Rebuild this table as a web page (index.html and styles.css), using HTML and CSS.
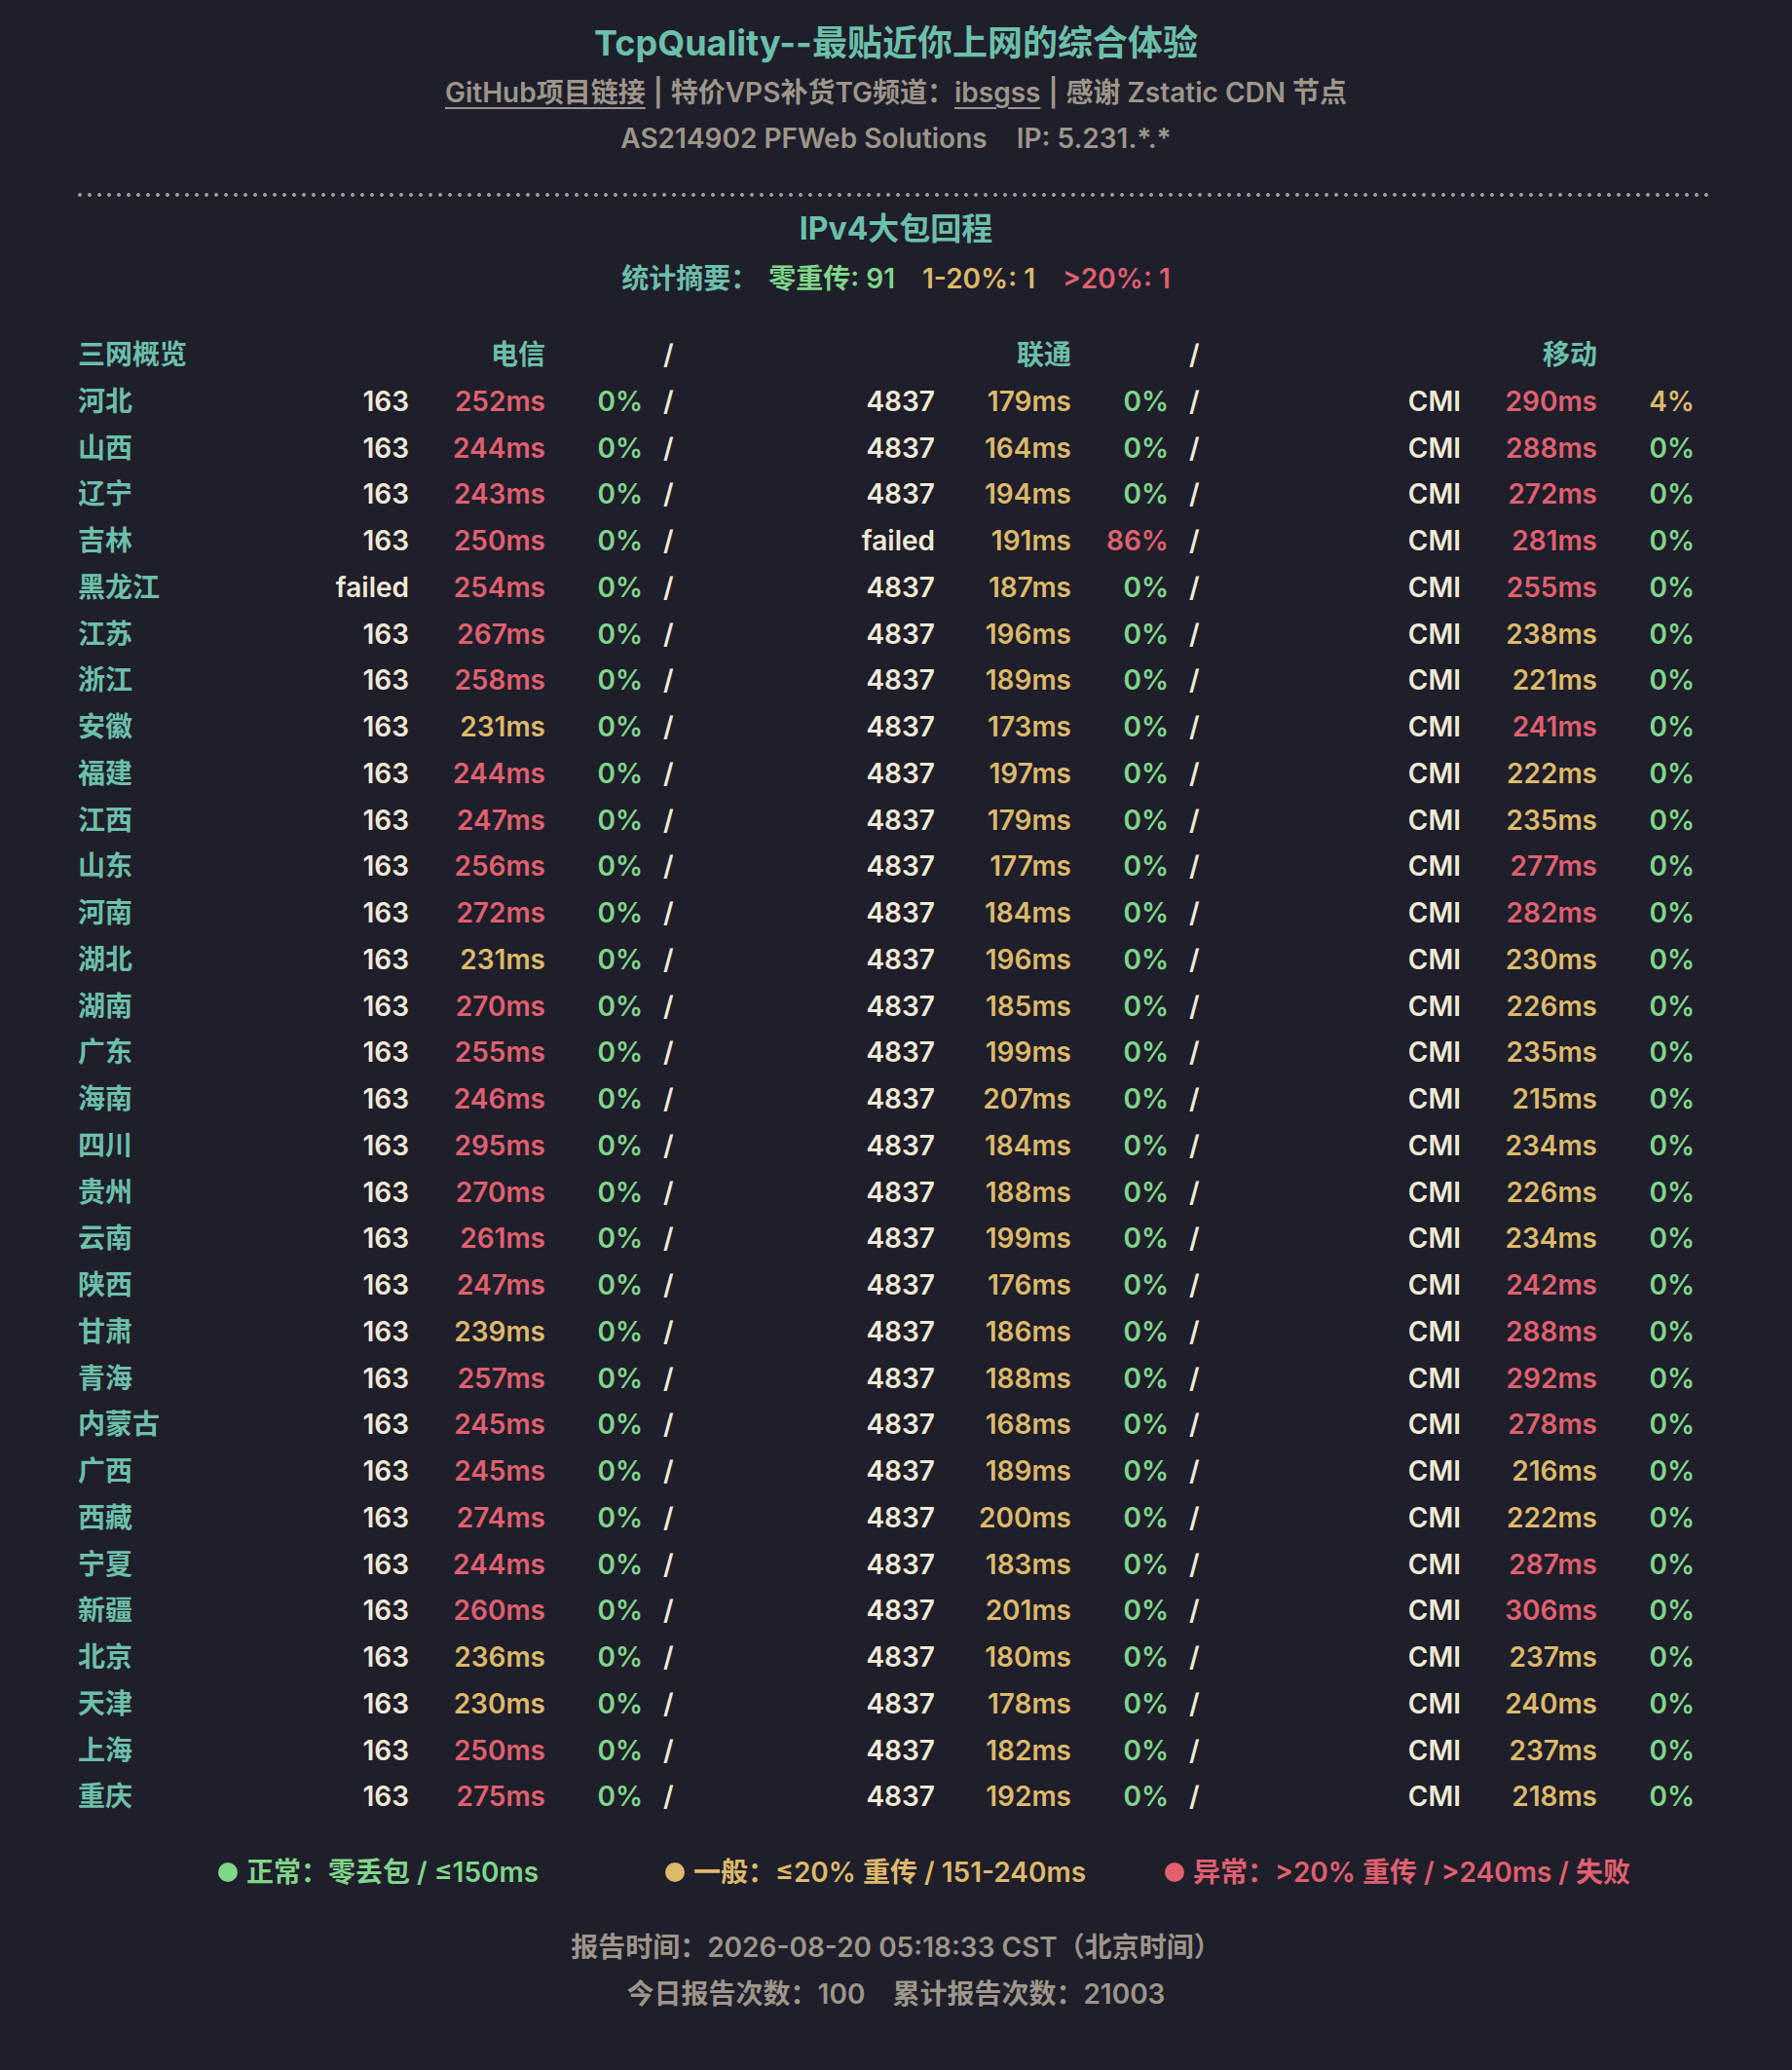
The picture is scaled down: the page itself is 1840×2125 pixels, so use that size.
FILE: index.html
```html
<!DOCTYPE html>
<html lang="zh-CN">
<head>
<meta charset="utf-8">
<title>TcpQuality</title>
<link rel="stylesheet" href="styles.css">
</head>
<body>
<div class="page">
  <header class="head">
    <h1 class="title">TcpQuality--最贴近你上网的综合体验</h1>
    <p class="sub"><a class="lnk">GitHub项目链接</a><span class="sep">|</span>特价VPS补货TG频道：<a class="lnk">ibsgss</a><span class="sep">|</span>感谢 Zstatic CDN 节点</p>
    <p class="asinfo"><span>AS214902 PFWeb Solutions</span><span class="ip">IP: 5.231.*.*</span></p>
  </header>
  <div class="dots"></div>
  <h2 class="sect">IPv4大包回程</h2>
  <p class="summary"><span class="t">统计摘要：</span><span class="g">零重传: 91</span><span class="y">1-20%: 1</span><span class="r">&gt;20%: 1</span></p>

  <div class="tbl">
    <div class="row hdr"><span class="nm">三网概览</span><span></span><span class="isp">电信</span><span></span><span class="sl">/</span><span></span><span class="isp">联通</span><span></span><span class="sl">/</span><span></span><span class="isp">移动</span><span></span></div>
    <div class="row"><span class="nm">河北</span><span class="as">163</span><span class="r">252ms</span><span class="g">0%</span><span class="sl">/</span><span class="as">4837</span><span class="y">179ms</span><span class="g">0%</span><span class="sl">/</span><span class="as">CMI</span><span class="r">290ms</span><span class="y">4%</span></div>
    <div class="row"><span class="nm">山西</span><span class="as">163</span><span class="r">244ms</span><span class="g">0%</span><span class="sl">/</span><span class="as">4837</span><span class="y">164ms</span><span class="g">0%</span><span class="sl">/</span><span class="as">CMI</span><span class="r">288ms</span><span class="g">0%</span></div>
    <div class="row"><span class="nm">辽宁</span><span class="as">163</span><span class="r">243ms</span><span class="g">0%</span><span class="sl">/</span><span class="as">4837</span><span class="y">194ms</span><span class="g">0%</span><span class="sl">/</span><span class="as">CMI</span><span class="r">272ms</span><span class="g">0%</span></div>
    <div class="row"><span class="nm">吉林</span><span class="as">163</span><span class="r">250ms</span><span class="g">0%</span><span class="sl">/</span><span class="as">failed</span><span class="y">191ms</span><span class="r">86%</span><span class="sl">/</span><span class="as">CMI</span><span class="r">281ms</span><span class="g">0%</span></div>
    <div class="row"><span class="nm">黑龙江</span><span class="as">failed</span><span class="r">254ms</span><span class="g">0%</span><span class="sl">/</span><span class="as">4837</span><span class="y">187ms</span><span class="g">0%</span><span class="sl">/</span><span class="as">CMI</span><span class="r">255ms</span><span class="g">0%</span></div>
    <div class="row"><span class="nm">江苏</span><span class="as">163</span><span class="r">267ms</span><span class="g">0%</span><span class="sl">/</span><span class="as">4837</span><span class="y">196ms</span><span class="g">0%</span><span class="sl">/</span><span class="as">CMI</span><span class="y">238ms</span><span class="g">0%</span></div>
    <div class="row"><span class="nm">浙江</span><span class="as">163</span><span class="r">258ms</span><span class="g">0%</span><span class="sl">/</span><span class="as">4837</span><span class="y">189ms</span><span class="g">0%</span><span class="sl">/</span><span class="as">CMI</span><span class="y">221ms</span><span class="g">0%</span></div>
    <div class="row"><span class="nm">安徽</span><span class="as">163</span><span class="y">231ms</span><span class="g">0%</span><span class="sl">/</span><span class="as">4837</span><span class="y">173ms</span><span class="g">0%</span><span class="sl">/</span><span class="as">CMI</span><span class="r">241ms</span><span class="g">0%</span></div>
    <div class="row"><span class="nm">福建</span><span class="as">163</span><span class="r">244ms</span><span class="g">0%</span><span class="sl">/</span><span class="as">4837</span><span class="y">197ms</span><span class="g">0%</span><span class="sl">/</span><span class="as">CMI</span><span class="y">222ms</span><span class="g">0%</span></div>
    <div class="row"><span class="nm">江西</span><span class="as">163</span><span class="r">247ms</span><span class="g">0%</span><span class="sl">/</span><span class="as">4837</span><span class="y">179ms</span><span class="g">0%</span><span class="sl">/</span><span class="as">CMI</span><span class="y">235ms</span><span class="g">0%</span></div>
    <div class="row"><span class="nm">山东</span><span class="as">163</span><span class="r">256ms</span><span class="g">0%</span><span class="sl">/</span><span class="as">4837</span><span class="y">177ms</span><span class="g">0%</span><span class="sl">/</span><span class="as">CMI</span><span class="r">277ms</span><span class="g">0%</span></div>
    <div class="row"><span class="nm">河南</span><span class="as">163</span><span class="r">272ms</span><span class="g">0%</span><span class="sl">/</span><span class="as">4837</span><span class="y">184ms</span><span class="g">0%</span><span class="sl">/</span><span class="as">CMI</span><span class="r">282ms</span><span class="g">0%</span></div>
    <div class="row"><span class="nm">湖北</span><span class="as">163</span><span class="y">231ms</span><span class="g">0%</span><span class="sl">/</span><span class="as">4837</span><span class="y">196ms</span><span class="g">0%</span><span class="sl">/</span><span class="as">CMI</span><span class="y">230ms</span><span class="g">0%</span></div>
    <div class="row"><span class="nm">湖南</span><span class="as">163</span><span class="r">270ms</span><span class="g">0%</span><span class="sl">/</span><span class="as">4837</span><span class="y">185ms</span><span class="g">0%</span><span class="sl">/</span><span class="as">CMI</span><span class="y">226ms</span><span class="g">0%</span></div>
    <div class="row"><span class="nm">广东</span><span class="as">163</span><span class="r">255ms</span><span class="g">0%</span><span class="sl">/</span><span class="as">4837</span><span class="y">199ms</span><span class="g">0%</span><span class="sl">/</span><span class="as">CMI</span><span class="y">235ms</span><span class="g">0%</span></div>
    <div class="row"><span class="nm">海南</span><span class="as">163</span><span class="r">246ms</span><span class="g">0%</span><span class="sl">/</span><span class="as">4837</span><span class="y">207ms</span><span class="g">0%</span><span class="sl">/</span><span class="as">CMI</span><span class="y">215ms</span><span class="g">0%</span></div>
    <div class="row"><span class="nm">四川</span><span class="as">163</span><span class="r">295ms</span><span class="g">0%</span><span class="sl">/</span><span class="as">4837</span><span class="y">184ms</span><span class="g">0%</span><span class="sl">/</span><span class="as">CMI</span><span class="y">234ms</span><span class="g">0%</span></div>
    <div class="row"><span class="nm">贵州</span><span class="as">163</span><span class="r">270ms</span><span class="g">0%</span><span class="sl">/</span><span class="as">4837</span><span class="y">188ms</span><span class="g">0%</span><span class="sl">/</span><span class="as">CMI</span><span class="y">226ms</span><span class="g">0%</span></div>
    <div class="row"><span class="nm">云南</span><span class="as">163</span><span class="r">261ms</span><span class="g">0%</span><span class="sl">/</span><span class="as">4837</span><span class="y">199ms</span><span class="g">0%</span><span class="sl">/</span><span class="as">CMI</span><span class="y">234ms</span><span class="g">0%</span></div>
    <div class="row"><span class="nm">陕西</span><span class="as">163</span><span class="r">247ms</span><span class="g">0%</span><span class="sl">/</span><span class="as">4837</span><span class="y">176ms</span><span class="g">0%</span><span class="sl">/</span><span class="as">CMI</span><span class="r">242ms</span><span class="g">0%</span></div>
    <div class="row"><span class="nm">甘肃</span><span class="as">163</span><span class="y">239ms</span><span class="g">0%</span><span class="sl">/</span><span class="as">4837</span><span class="y">186ms</span><span class="g">0%</span><span class="sl">/</span><span class="as">CMI</span><span class="r">288ms</span><span class="g">0%</span></div>
    <div class="row"><span class="nm">青海</span><span class="as">163</span><span class="r">257ms</span><span class="g">0%</span><span class="sl">/</span><span class="as">4837</span><span class="y">188ms</span><span class="g">0%</span><span class="sl">/</span><span class="as">CMI</span><span class="r">292ms</span><span class="g">0%</span></div>
    <div class="row"><span class="nm">内蒙古</span><span class="as">163</span><span class="r">245ms</span><span class="g">0%</span><span class="sl">/</span><span class="as">4837</span><span class="y">168ms</span><span class="g">0%</span><span class="sl">/</span><span class="as">CMI</span><span class="r">278ms</span><span class="g">0%</span></div>
    <div class="row"><span class="nm">广西</span><span class="as">163</span><span class="r">245ms</span><span class="g">0%</span><span class="sl">/</span><span class="as">4837</span><span class="y">189ms</span><span class="g">0%</span><span class="sl">/</span><span class="as">CMI</span><span class="y">216ms</span><span class="g">0%</span></div>
    <div class="row"><span class="nm">西藏</span><span class="as">163</span><span class="r">274ms</span><span class="g">0%</span><span class="sl">/</span><span class="as">4837</span><span class="y">200ms</span><span class="g">0%</span><span class="sl">/</span><span class="as">CMI</span><span class="y">222ms</span><span class="g">0%</span></div>
    <div class="row"><span class="nm">宁夏</span><span class="as">163</span><span class="r">244ms</span><span class="g">0%</span><span class="sl">/</span><span class="as">4837</span><span class="y">183ms</span><span class="g">0%</span><span class="sl">/</span><span class="as">CMI</span><span class="r">287ms</span><span class="g">0%</span></div>
    <div class="row"><span class="nm">新疆</span><span class="as">163</span><span class="r">260ms</span><span class="g">0%</span><span class="sl">/</span><span class="as">4837</span><span class="y">201ms</span><span class="g">0%</span><span class="sl">/</span><span class="as">CMI</span><span class="r">306ms</span><span class="g">0%</span></div>
    <div class="row"><span class="nm">北京</span><span class="as">163</span><span class="y">236ms</span><span class="g">0%</span><span class="sl">/</span><span class="as">4837</span><span class="y">180ms</span><span class="g">0%</span><span class="sl">/</span><span class="as">CMI</span><span class="y">237ms</span><span class="g">0%</span></div>
    <div class="row"><span class="nm">天津</span><span class="as">163</span><span class="y">230ms</span><span class="g">0%</span><span class="sl">/</span><span class="as">4837</span><span class="y">178ms</span><span class="g">0%</span><span class="sl">/</span><span class="as">CMI</span><span class="y">240ms</span><span class="g">0%</span></div>
    <div class="row"><span class="nm">上海</span><span class="as">163</span><span class="r">250ms</span><span class="g">0%</span><span class="sl">/</span><span class="as">4837</span><span class="y">182ms</span><span class="g">0%</span><span class="sl">/</span><span class="as">CMI</span><span class="y">237ms</span><span class="g">0%</span></div>
    <div class="row"><span class="nm">重庆</span><span class="as">163</span><span class="r">275ms</span><span class="g">0%</span><span class="sl">/</span><span class="as">4837</span><span class="y">192ms</span><span class="g">0%</span><span class="sl">/</span><span class="as">CMI</span><span class="y">218ms</span><span class="g">0%</span></div>
  </div>

  <div class="legend">
    <span class="li g"><i class="dot"></i>正常：零丢包 / ≤150ms</span>
    <span class="li y"><i class="dot"></i>一般：≤20% 重传 / 151-240ms</span>
    <span class="li r"><i class="dot"></i>异常：&gt;20% 重传 / &gt;240ms / 失败</span>
  </div>

  <footer class="foot">
    <p>报告时间：2026-08-20 05:18:33 CST（北京时间）</p>
    <p><span>今日报告次数：100</span><span class="cnt">累计报告次数：21003</span></p>
  </footer>
</div>
</body>
</html>
```

FILE: styles.css
```css
html, body {
  margin: 0;
  padding: 0;
  background: #1f1e2b;
}
body {
  font-family: Inter, "Noto Sans CJK SC", sans-serif;
  font-weight: 600;
  color: #f0ead6;
  min-height: 2125px;
}
.page {
  width: 1680px;
  margin: 0 auto;
  padding-top: 19px;
}
.head { text-align: center; }
.title {
  margin: 0;
  font-size: 36px;
  line-height: 50px;
  font-weight: 700;
  color: #6cbfa9;
}
.sub {
  margin: 2px 0 0;
  font-size: 28px;
  line-height: 48px;
  color: #9d968a;
}
.lnk {
  color: #9d968a;
  text-decoration: underline;
  text-underline-offset: 5px;
  text-decoration-thickness: 2px;
}
.sep { margin: 0 8px; }
.asinfo {
  margin: 0;
  font-size: 28px;
  line-height: 46px;
  color: #9d968a;
}
.ip { margin-left: 30px; }
.dots {
  margin: 33px 4px 0 -3px;
  height: 4px;
  background-image: radial-gradient(circle, #9d968a 1.8px, transparent 2.2px);
  background-size: 10px 4px;
  background-position: 0 0;
}
.sect {
  margin: 11px 0 0;
  text-align: center;
  font-size: 32px;
  line-height: 44px;
  font-weight: 700;
  color: #6cbfa9;
}
.summary {
  margin: 7px 0 0;
  text-align: center;
  font-size: 28px;
  line-height: 44px;
}
.summary span { margin: 0 14px; }
.summary .t { color: #6cbfa9; margin-right: -3px; }
.tbl {
  margin-top: 33px;
  font-size: 28px;
}
.row {
  display: grid;
  grid-template-columns: 220px 120px 140px 100px 180px 120px 140px 100px 180px 120px 140px 100px;
  height: 47.75px;
  line-height: 47.75px;
  white-space: nowrap;
}
.row span { text-align: right; }
.row .nm { text-align: left; color: #6cbfa9; }
.row .sl { text-align: left; padding-left: 21px; color: #f0ead6; }
.row .as { color: #f0ead6; }
.hdr .isp { color: #6cbfa9; }
.r { color: #e0606f; }
.y { color: #ddb96a; }
.g { color: #7fd68a; }
.t { color: #6cbfa9; }
.legend {
  margin-top: 31px;
  padding-left: 144px;
  display: flex;
  justify-content: flex-start;
  font-size: 28px;
  line-height: 44px;
}
.li { display: flex; align-items: center; }
.li.y { margin-left: 130px; }
.li.r { margin-left: 81px; }
.dot {
  width: 20px;
  height: 20px;
  border-radius: 50%;
  background: currentColor;
  margin-right: 9px;
}
.foot {
  margin-top: 31px;
  text-align: center;
  font-size: 28px;
  line-height: 48px;
  color: #9d968a;
}
.foot p { margin: 0; }
.cnt { margin-left: 28px; }
```
